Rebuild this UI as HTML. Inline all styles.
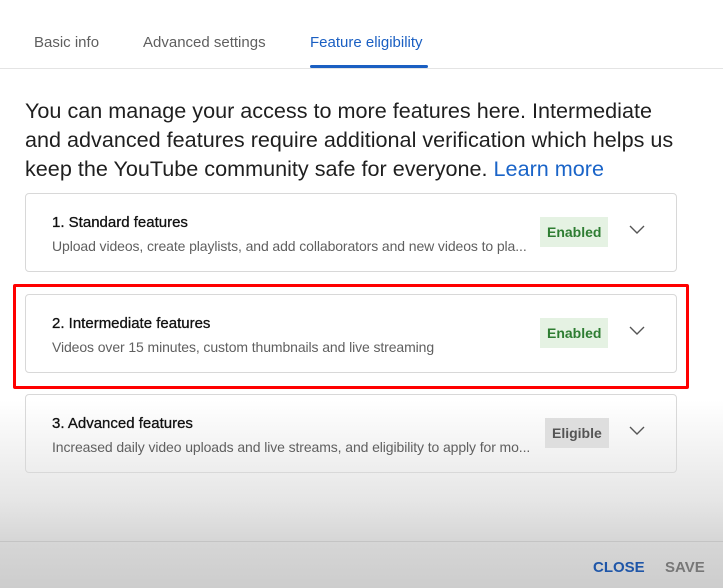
<!DOCTYPE html>
<html><head><style>
body{margin:0;width:723px;height:588px;overflow:hidden;font-family:"Liberation Sans",sans-serif;position:relative;
background:linear-gradient(to bottom,#fff 0,#fff 400px,#e6e6e6 500px,#d6d6d6 541px,#cdcdcd 588px);}
.tab{position:absolute;top:34px;font-size:15px;color:#5f5f5f}
.ul{position:absolute;left:310px;top:65px;width:118px;height:3px;background:#1a5fc2;border-radius:2px}
.hr{position:absolute;left:0;right:0;top:68px;height:1px;background:#e4e4e4}
.intro{position:absolute;left:25px;top:96px;width:655px;font-size:21.6px;line-height:29px;color:#1f1f1f}
.intro a{color:#1a64c8;text-decoration:none}
.card{position:absolute;left:25px;width:650px;height:77px;border:1px solid #d8d8d8;border-radius:4px;background:rgba(255,255,255,0.9)}
.t{position:absolute;left:26px;top:20px;font-size:15px;color:#111;-webkit-text-stroke:0.3px #111}
.d{position:absolute;left:26px;top:44px;font-size:14px;color:#606060;white-space:nowrap;letter-spacing:-0.1px}
.b{position:absolute;top:23px;height:30px;line-height:30px;font-size:14px;padding:0 7px;font-weight:bold}
.en{left:514px;background:#e5f2e3;color:#2e7d32}
.el{left:519px;background:#dedede;color:#555}
.ch{position:absolute;left:603px;top:31px}
.red{position:absolute;left:13px;top:284px;width:670px;height:99px;border:3px solid #f00;border-radius:2px}
.fl{position:absolute;left:0;right:0;top:541px;height:1px;background:#c4c4c4}
.btn{position:absolute;top:559px;font-size:15px;font-weight:bold}
</style></head><body>
<div class="tab" style="left:34px">Basic info</div>
<div class="tab" style="left:143px">Advanced settings</div>
<div class="tab" style="left:310px;color:#1a5fc2">Feature eligibility</div>
<div class="ul"></div><div class="hr"></div>
<div class="intro">You can manage your access to more features here. Intermediate and advanced features require additional verification which helps us keep the YouTube community safe for everyone. <a>Learn more</a></div>
<div class="card" style="top:193px"><div class="t">1. Standard features</div><div class="d">Upload videos, create playlists, and add collaborators and new videos to pla...</div><div class="b en">Enabled</div><svg class="ch" width="16" height="10"><path d="M1 1l7 7 7-7" fill="none" stroke="#555" stroke-width="1.4"/></svg></div>
<div class="card" style="top:294px"><div class="t">2. Intermediate features</div><div class="d">Videos over 15 minutes, custom thumbnails and live streaming</div><div class="b en">Enabled</div><svg class="ch" width="16" height="10"><path d="M1 1l7 7 7-7" fill="none" stroke="#555" stroke-width="1.4"/></svg></div>
<div class="card" style="top:394px;background:transparent"><div class="t">3. Advanced features</div><div class="d">Increased daily video uploads and live streams, and eligibility to apply for mo...</div><div class="b el">Eligible</div><svg class="ch" width="16" height="10"><path d="M1 1l7 7 7-7" fill="none" stroke="#555" stroke-width="1.4"/></svg></div>
<div class="red"></div>
<div class="fl"></div>
<div class="btn" style="left:593px;color:#1f56a8">CLOSE</div>
<div class="btn" style="left:665px;color:#777">SAVE</div>
</body></html>
